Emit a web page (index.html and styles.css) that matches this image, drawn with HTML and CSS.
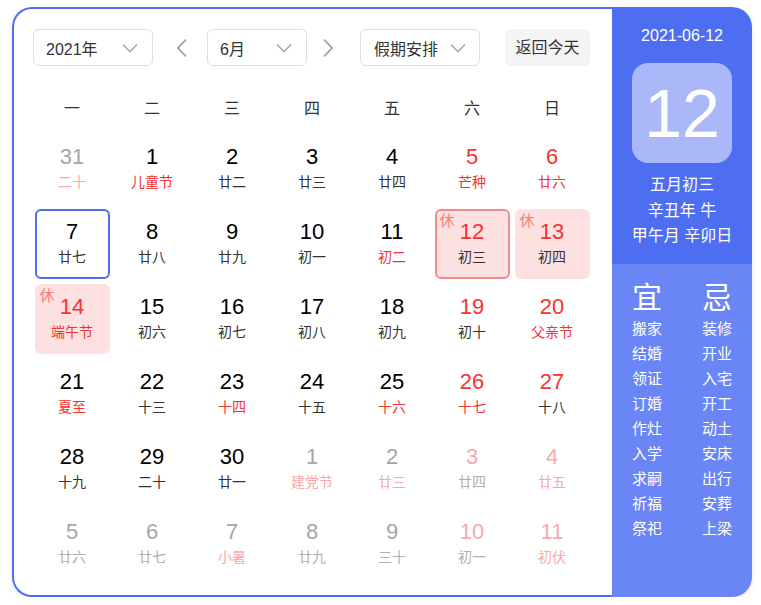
FILE: index.html
```html
<!DOCTYPE html>
<html lang="zh-CN">
<head>
<meta charset="utf-8">
<title>万年历</title>
<link rel="stylesheet" href="styles.css">
</head>
<body>
<div class="cal">
  <div class="main">
    <div class="toolbar">
      <div class="select year"><span>2021年</span><svg class="chev" width="16" height="10" viewBox="0 0 16 10"><polyline points="1,1.5 8,8.5 15,1.5"/></svg></div>
      <svg class="arrow prev" width="20" height="20" viewBox="0 0 20 20"><polyline points="14,1.5 6,10 14,18.5"/></svg>
      <div class="select month"><span>6月</span><svg class="chev" width="16" height="10" viewBox="0 0 16 10"><polyline points="1,1.5 8,8.5 15,1.5"/></svg></div>
      <svg class="arrow next" width="20" height="20" viewBox="0 0 20 20"><polyline points="6,1.5 14,10 6,18.5"/></svg>
      <div class="select holiday"><span>假期安排</span><svg class="chev" width="16" height="10" viewBox="0 0 16 10"><polyline points="1,1.5 8,8.5 15,1.5"/></svg></div>
      <div class="btn">返回今天</div>
    </div>
    <div class="week">
      <span>一</span><span>二</span><span>三</span><span>四</span><span>五</span><span>六</span><span>日</span>
    </div>
    <div class="grid">
      <div class="cell"><span class="n g">31</span><span class="l p">二十</span></div>
      <div class="cell"><span class="n">1</span><span class="l r">儿童节</span></div>
      <div class="cell"><span class="n">2</span><span class="l">廿二</span></div>
      <div class="cell"><span class="n">3</span><span class="l">廿三</span></div>
      <div class="cell"><span class="n">4</span><span class="l">廿四</span></div>
      <div class="cell"><span class="n r">5</span><span class="l r">芒种</span></div>
      <div class="cell"><span class="n r">6</span><span class="l r">廿六</span></div>

      <div class="cell today"><span class="n">7</span><span class="l">廿七</span></div>
      <div class="cell"><span class="n">8</span><span class="l">廿八</span></div>
      <div class="cell"><span class="n">9</span><span class="l">廿九</span></div>
      <div class="cell"><span class="n">10</span><span class="l">初一</span></div>
      <div class="cell"><span class="n">11</span><span class="l r">初二</span></div>
      <div class="cell rest sel"><span class="xiu">休</span><span class="n r">12</span><span class="l">初三</span></div>
      <div class="cell rest"><span class="xiu">休</span><span class="n r">13</span><span class="l">初四</span></div>

      <div class="cell rest"><span class="xiu">休</span><span class="n r">14</span><span class="l r">端午节</span></div>
      <div class="cell"><span class="n">15</span><span class="l">初六</span></div>
      <div class="cell"><span class="n">16</span><span class="l">初七</span></div>
      <div class="cell"><span class="n">17</span><span class="l">初八</span></div>
      <div class="cell"><span class="n">18</span><span class="l">初九</span></div>
      <div class="cell"><span class="n r">19</span><span class="l">初十</span></div>
      <div class="cell"><span class="n r">20</span><span class="l r">父亲节</span></div>

      <div class="cell"><span class="n">21</span><span class="l r">夏至</span></div>
      <div class="cell"><span class="n">22</span><span class="l">十三</span></div>
      <div class="cell"><span class="n">23</span><span class="l r">十四</span></div>
      <div class="cell"><span class="n">24</span><span class="l">十五</span></div>
      <div class="cell"><span class="n">25</span><span class="l r">十六</span></div>
      <div class="cell"><span class="n r">26</span><span class="l r">十七</span></div>
      <div class="cell"><span class="n r">27</span><span class="l">十八</span></div>

      <div class="cell"><span class="n">28</span><span class="l">十九</span></div>
      <div class="cell"><span class="n">29</span><span class="l">二十</span></div>
      <div class="cell"><span class="n">30</span><span class="l">廿一</span></div>
      <div class="cell"><span class="n g">1</span><span class="l p">建党节</span></div>
      <div class="cell"><span class="n g">2</span><span class="l p">廿三</span></div>
      <div class="cell"><span class="n p">3</span><span class="l g">廿四</span></div>
      <div class="cell"><span class="n p">4</span><span class="l p">廿五</span></div>

      <div class="cell"><span class="n g">5</span><span class="l g">廿六</span></div>
      <div class="cell"><span class="n g">6</span><span class="l g">廿七</span></div>
      <div class="cell"><span class="n g">7</span><span class="l p">小暑</span></div>
      <div class="cell"><span class="n g">8</span><span class="l g">廿九</span></div>
      <div class="cell"><span class="n g">9</span><span class="l g">三十</span></div>
      <div class="cell"><span class="n p">10</span><span class="l g">初一</span></div>
      <div class="cell"><span class="n p">11</span><span class="l p">初伏</span></div>
    </div>
  </div>
  <div class="side">
    <div class="side-top">
      <div class="date">2021-06-12</div>
      <div class="big">12</div>
      <div class="lunar">
        <div>五月初三</div>
        <div>辛丑年 牛</div>
        <div>甲午月 辛卯日</div>
      </div>
    </div>
    <div class="side-bottom">
      <div class="col">
        <div class="head">宜</div>
        <div>搬家</div><div>结婚</div><div>领证</div><div>订婚</div><div>作灶</div><div>入学</div><div>求嗣</div><div>祈福</div><div>祭祀</div>
      </div>
      <div class="col">
        <div class="head">忌</div>
        <div>装修</div><div>开业</div><div>入宅</div><div>开工</div><div>动土</div><div>安床</div><div>出行</div><div>安葬</div><div>上梁</div>
      </div>
    </div>
  </div>
</div>
</body>
</html>
```
FILE: styles.css
```css
html, body {
  margin: 0;
  padding: 0;
  background: #fff;
}
body {
  font-family: "Liberation Sans", "Noto Sans CJK SC", sans-serif;
  color: #333;
}
.cal {
  display: flex;
  width: 740px;
  height: 590px;
  margin: 7px 0 0 12px;
  border-radius: 20px;
  box-shadow: 0 2px 6px rgba(0, 0, 0, 0.08);
}
.main {
  width: 600px;
  box-sizing: border-box;
  border: 2px solid #4e6ef2;
  border-right: none;
  border-radius: 20px 0 0 20px;
  padding: 20px 18px 0 18px;
  background: #fff;
}
.toolbar {
  display: flex;
  align-items: center;
  height: 37px;
}
.select {
  box-sizing: border-box;
  height: 37px;
  border: 1px solid #dcdfe6;
  border-radius: 6px;
  display: flex;
  align-items: center;
  justify-content: space-between;
  padding: 0 14px 0 12px;
  font-size: 16px;
  color: #333;
}
.select.year { width: 120px; margin-left: 1px; }
.select.month { width: 100px; margin-left: 15px; }
.select.holiday { width: 120px; margin-left: 22px; padding: 0 13px 0 13px; }
.chev polyline {
  fill: none;
  stroke: #a8abb2;
  stroke-width: 1.6;
}
.arrow polyline {
  fill: none;
  stroke: #9a9ca3;
  stroke-width: 1.8;
}
.arrow.prev { margin-left: 19px; }
.arrow.next { margin-left: 11px; }
.btn {
  box-sizing: border-box;
  width: 85px;
  height: 37px;
  margin-left: 25px;
  border-radius: 6px;
  background: #f4f4f5;
  font-size: 16px;
  line-height: 37px;
  text-align: center;
  color: #333;
}
.week {
  display: grid;
  grid-template-columns: repeat(7, 80px);
  height: 30px;
  line-height: 30px;
  margin-top: 28px;
  margin-bottom: 7.5px;
  font-size: 16px;
  text-align: center;
  color: #333;
}
.grid {
  display: grid;
  grid-template-columns: repeat(7, 75px);
  grid-auto-rows: 70px;
  gap: 5px;
  padding: 2.5px;
}
.cell {
  position: relative;
  box-sizing: border-box;
  border-radius: 6px;
  display: flex;
  flex-direction: column;
  align-items: center;
  padding-top: 10px;
}
.cell.today {
  border: 2px solid #4e6ef2;
  padding-top: 8px;
}
.cell.rest {
  background: #fde1e1;
}
.cell.sel {
  border: 2px solid #f28a8a;
  padding-top: 8px;
}
.n {
  font-size: 22px;
  line-height: 26px;
  color: #000;
}
.l {
  font-size: 14px;
  line-height: 20px;
  margin-top: 2px;
  color: #333;
}
.n.r, .l.r { color: #f73131; }
.n.g { color: #a6a6a6; }
.l.g { color: #b0b0b0; }
.n.p, .l.p { color: #faa8a8; }
.xiu {
  position: absolute;
  top: 4px;
  left: 5px;
  font-size: 15px;
  line-height: 16px;
  color: #f47f7f;
}
.sel .xiu { top: 2px; left: 3px; }
.side {
  width: 140px;
  display: flex;
  flex-direction: column;
  border-radius: 0 20px 20px 0;
  overflow: hidden;
  color: #fff;
}
.side-top {
  height: 257px;
  background: #4e6ef2;
  text-align: center;
  padding-top: 19px;
  box-sizing: border-box;
}
.date {
  font-size: 16px;
  line-height: 20px;
}
.big {
  width: 100px;
  height: 100px;
  margin: 17px auto 0;
  border-radius: 16px;
  background: #aab8fa;
  font-size: 68px;
  line-height: 100px;
}
.lunar {
  margin-top: 9px;
  font-size: 16px;
  line-height: 25.5px;
}
.side-bottom {
  flex: 1;
  background: #6a85f5;
  display: grid;
  grid-template-columns: 70px 70px;
  align-content: start;
  padding-top: 16px;
  text-align: center;
  font-size: 15px;
  line-height: 25px;
}
.col .head {
  font-size: 30px;
  line-height: 36px;
}
```
